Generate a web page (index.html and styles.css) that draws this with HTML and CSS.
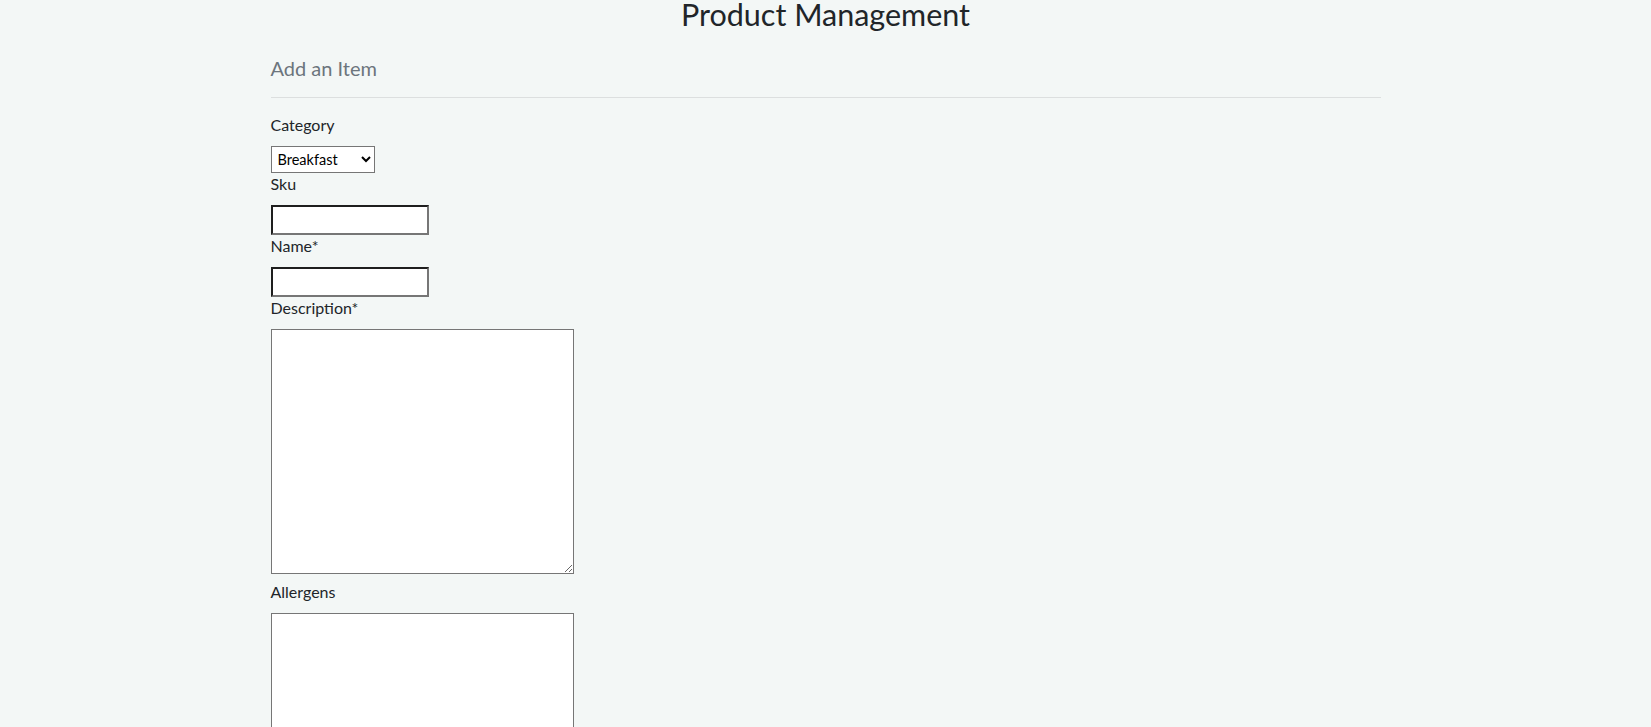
FILE: index.html
```html
<!DOCTYPE html>
<html lang="en">
<head>
<meta charset="utf-8">
<title>Product Management</title>
<link rel="stylesheet" href="styles.css">
</head>
<body>
<h1 class="page-title">Product Management</h1>
<div class="container">
  <h2 class="section-title">Add an Item</h2>
  <hr class="divider">
  <form class="item-form">
    <label class="field-label" for="category">Category</label>
    <select class="field-select" id="category">
      <option>Breakfast</option>
      <option>Lunch</option>
      <option>Dinner</option>
    </select>
    <label class="field-label" for="sku">Sku</label>
    <input class="field-input" id="sku" type="text">
    <label class="field-label" for="name">Name*</label>
    <input class="field-input" id="name" type="text">
    <label class="field-label" for="description">Description*</label>
    <textarea class="field-textarea" id="description"></textarea>
    <label class="field-label" for="allergens">Allergens</label>
    <textarea class="field-textarea" id="allergens"></textarea>
  </form>
</div>
</body>
</html>
```
FILE: styles.css
```css
html, body {
  margin: 0;
  padding: 0;
}
body {
  background: #f3f7f6;
  font-family: Lato, "Noto Sans", sans-serif;
  color: #212529;
  overflow: hidden;
  height: 727px;
}
.page-title {
  margin: 0;
  font-size: 30.5px;
  font-weight: 400;
  line-height: 28px;
  text-align: center;
  color: #212529;
}
.container {
  width: 1110px;
  margin: 0 auto;
}
.section-title {
  margin: 28px 0 0;
  font-size: 20px;
  font-weight: 400;
  line-height: 24px;
  color: #6c757d;
}
.divider {
  margin: 17px 0 0;
  border: 0;
  border-top: 1px solid #dcdfdf;
  height: 0;
}
.item-form {
  display: flex;
  flex-direction: column;
  align-items: flex-start;
  padding-top: 16px;
}
.field-label {
  display: block;
  font-size: 16px;
  line-height: 22px;
  margin-bottom: 10px;
  color: #212529;
}
.field-select {
  display: block;
  box-sizing: border-box;
  width: 104px;
  height: 27px;
  font-family: Lato, "Noto Sans", sans-serif;
  font-size: 14.5px;
  color: #000;
  background: #fff;
  border: 1px solid #767676;
  border-radius: 0;
  padding: 0 2px;
}
.field-input {
  display: block;
  box-sizing: border-box;
  width: 158px;
  height: 30px;
  font-family: Lato, "Noto Sans", sans-serif;
  font-size: 16px;
  background: #fff;
  border-style: solid;
  border-width: 2px;
  border-color: #1e1e1e #767676 #767676 #1e1e1e;
  border-radius: 0;
  padding: 1px 2px;
}
.field-textarea {
  display: block;
  box-sizing: border-box;
  width: 303px;
  height: 245px;
  background: #fff;
  border: 1px solid #767676;
  border-radius: 0;
  margin-bottom: 7px;
  font-family: Lato, "Noto Sans", sans-serif;
  font-size: 16px;
}
```
